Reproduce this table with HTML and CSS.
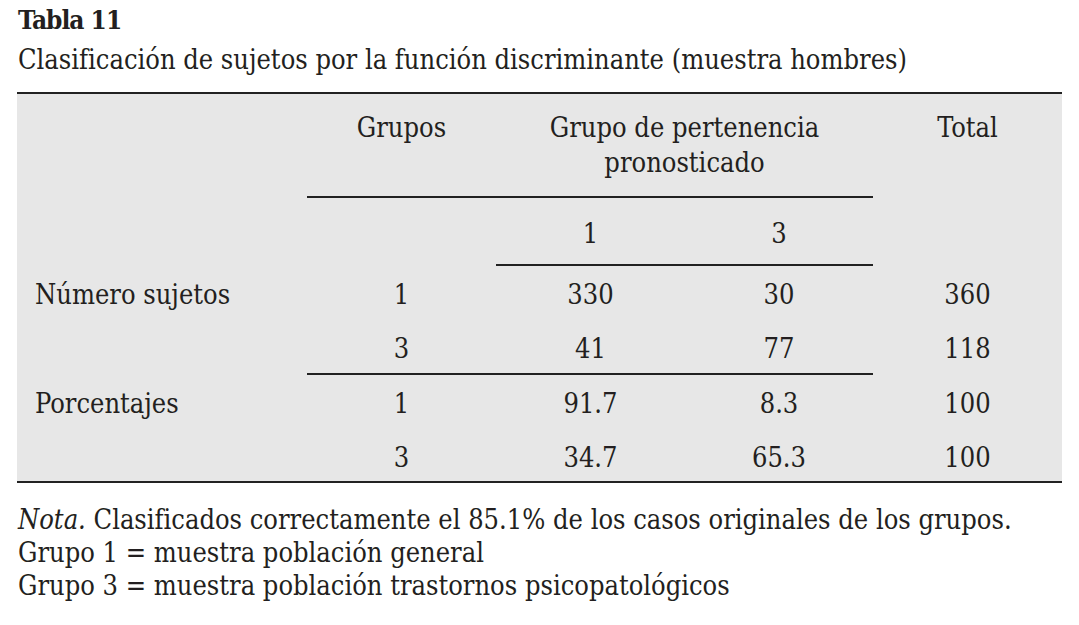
FILE: index.html
```html
<!DOCTYPE html>
<html lang="es">
<head>
<meta charset="utf-8">
<title>Tabla 11</title>
<link rel="stylesheet" href="styles.css">
</head>
<body>
<div class="page">
  <div class="title">Tabla 11</div>
  <div class="caption">Clasificación de sujetos por la función discriminante (muestra hombres)</div>

  <div class="tbl">
    <div class="hd"></div>
    <div class="hd c">Grupos</div>
    <div class="hd c span2">Grupo de pertenencia<br>pronosticado</div>
    <div class="hd c">Total</div>

    <div></div>
    <div class="rule wide"></div>
    <div></div>

    <div class="sub"></div>
    <div class="sub"></div>
    <div class="sub c">1</div>
    <div class="sub c">3</div>
    <div class="sub"></div>

    <div></div>
    <div></div>
    <div class="rule short"></div>
    <div></div>

    <div class="ra lbl">Número sujetos</div>
    <div class="ra c">1</div>
    <div class="ra c">330</div>
    <div class="ra c">30</div>
    <div class="ra c">360</div>

    <div class="rb"></div>
    <div class="rb c">3</div>
    <div class="rb c">41</div>
    <div class="rb c">77</div>
    <div class="rb c">118</div>

    <div></div>
    <div class="rule wide"></div>
    <div></div>

    <div class="ra lbl">Porcentajes</div>
    <div class="ra c">1</div>
    <div class="ra c">91.7</div>
    <div class="ra c">8.3</div>
    <div class="ra c">100</div>

    <div class="rb last"></div>
    <div class="rb last c">3</div>
    <div class="rb last c">34.7</div>
    <div class="rb last c">65.3</div>
    <div class="rb last c">100</div>
  </div>

  <div class="note">
    <p><em>Nota.</em> Clasificados correctamente el 85.1% de los casos originales de los grupos.</p>
    <p>Grupo 1 = muestra población general</p>
    <p>Grupo 3 = muestra población trastornos psicopatológicos</p>
  </div>
</div>
</body>
</html>
```

FILE: styles.css
```css
html, body {
  margin: 0;
  padding: 0;
  background: #ffffff;
}

body {
  font-family: "DejaVu Serif Condensed", "DejaVu Serif", serif;
  font-stretch: condensed;
  color: #231f20;
  font-size: 27px;
}

.page {
  padding: 0 17px;
}

.title {
  font-weight: bold;
  font-size: 26px;
  letter-spacing: -1px;
  line-height: 40px;
  padding-left: 1px;
}

.caption {
  line-height: 40px;
  padding-left: 1px;
  margin-bottom: 12px;
}

.tbl {
  display: grid;
  grid-template-columns: 290px 189px 189px 188px 189px;
  width: 1045px;
  background: #e7e7e7;
  border-top: 2px solid #222;
  border-bottom: 2px solid #222;
  line-height: 35px;
}

.c {
  text-align: center;
}

.span2 {
  grid-column: span 2;
}

.hd {
  padding: 16px 0 16px;
}

.rule {
  height: 2px;
  background: #222;
}

.rule.wide {
  grid-column: 2 / 5;
}

.rule.short {
  grid-column: 3 / 5;
}

.sub {
  padding: 18px 0 13px;
}

.ra {
  padding: 11px 0 9px;
}

.rb {
  padding: 10px 0 7px;
}

.rb.last {
  padding-bottom: 6px;
}

.lbl {
  padding-left: 18px;
}

.note {
  margin-top: 20px;
  line-height: 33px;
}

.note p {
  margin: 0;
  padding-left: 1px;
}

.note em {
  font-style: italic;
}
```
